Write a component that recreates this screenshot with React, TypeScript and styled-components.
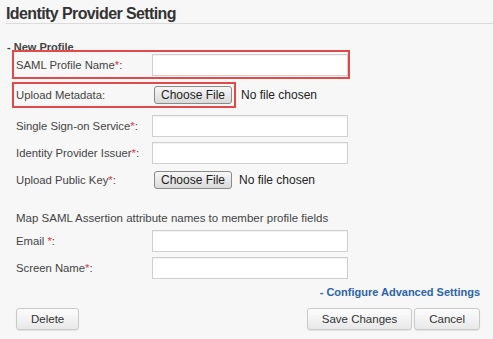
import React from "react";
import styled, { createGlobalStyle } from "styled-components";

const Global = createGlobalStyle`
  html, body { margin: 0; padding: 0; background: #f7f7f7; }
  body { font-family: "Liberation Sans", Arial, sans-serif; color: #444; }
  * { box-sizing: border-box; }
`;

const Page = styled.div`
  width: 493px;
  height: 339px;
  background: #f7f7f7;
  overflow: hidden;
`;

const Title = styled.h1`
  margin: 0 0 0 6px;
  padding-top: 5px;
  font-size: 16px;
  line-height: 18px;
  font-weight: bold;
  letter-spacing: -0.6px;
  color: #333;
  border-bottom: 1px solid #dcdcdc;
`;

const Form = styled.form`
  display: flex;
  flex-direction: column;
  align-items: flex-start;
  padding: 0 13px 0 12px;
  margin: 0;
`;

const Legend = styled.div`
  margin: 17px 0 -4px -5px;
  font-size: 11px;
  font-weight: bold;
  line-height: 13px;
  color: #444;
`;

const Line = styled.div<{ $mt: number }>`
  display: flex;
  align-items: center;
  margin-top: ${(p) => p.$mt}px;
`;

const Frame = styled.div<{ $highlight?: boolean; $h: number }>`
  position: relative;
  display: flex;
  align-items: center;
  height: ${(p) => p.$h}px;
  border: ${(p) => (p.$highlight ? "2px solid #e24a4a" : "none")};
  padding-left: ${(p) => (p.$highlight ? 2 : 4)}px;
`;

const Label = styled.label`
  width: 136px;
  flex-shrink: 0;
  font-size: 11.3px;
  color: #444;
  white-space: nowrap;
`;

const Req = styled.span`
  color: #e8343a;
`;

const TextInput = styled.input`
  width: 196px;
  height: 22px;
  margin: 0;
  border: 1px solid #cfcfcf;
  background: #fff;
  box-shadow: inset 0 1px 1px rgba(0, 0, 0, 0.06);
  font: 12px "Liberation Sans", Arial, sans-serif;
  padding: 2px 4px;
`;

const FileButton = styled.button`
  width: 78px;
  height: 18px;
  margin: 0 2px;
  padding: 0;
  border: 1px solid #8a8a8a;
  border-radius: 3px;
  background: linear-gradient(#f7f7f7, #dadada);
  font: 12px "Liberation Sans", Arial, sans-serif;
  color: #222;
  line-height: 16px;
  white-space: nowrap;
`;

const NoFile = styled.span`
  margin-left: 5px;
  font-size: 12px;
  color: #222;
`;

const Note = styled.p`
  margin: 20px 0 0 4px;
  font-size: 11.5px;
  line-height: 14px;
  color: #444;
`;

const Advanced = styled.a`
  align-self: flex-end;
  margin-top: 6px;
  font-size: 11px;
  font-weight: bold;
  line-height: 14px;
  color: #2a63a8;
  text-decoration: none;
`;

const Actions = styled.div`
  align-self: stretch;
  display: flex;
  justify-content: space-between;
  margin-top: 9px;
  padding-left: 4px;
`;

const ButtonGroup = styled.div`
  display: flex;
  gap: 2px;
`;

const ActionButton = styled.button`
  height: 22px;
  padding: 0 14px;
  border: 1px solid #c9c9c9;
  border-radius: 3px;
  background: linear-gradient(#fdfdfd, #e8e8e8);
  box-shadow: 0 1px 1px rgba(0, 0, 0, 0.08);
  font: 11.5px "Liberation Sans", Arial, sans-serif;
  color: #333;
`;

type TextField = { label: string; req?: boolean; spaced?: boolean };

const ReqLabel = ({ label, req, spaced }: TextField) => (
  <Label>
    {label}
    {req && (
      <>
        {spaced ? " " : ""}
        <Req>*</Req>
      </>
    )}
    :
  </Label>
);

export default function App() {
  return (
    <Page>
      <Global />
      <Title>Identity Provider Setting</Title>
      <Form onSubmit={(e) => e.preventDefault()}>
        <Legend>- New Profile</Legend>
        <Line $mt={0}>
          <Frame $highlight $h={29}>
            <ReqLabel label="SAML Profile Name" req />
            <TextInput type="text" />
          </Frame>
        </Line>
        <Line $mt={3}>
          <Frame $highlight $h={26}>
            <ReqLabel label="Upload Metadata" />
            <FileButton type="button">Choose File</FileButton>
          </Frame>
          <NoFile>No file chosen</NoFile>
        </Line>
        <Line $mt={7}>
          <Frame $h={22}>
            <ReqLabel label="Single Sign-on Service" req />
            <TextInput type="text" />
          </Frame>
        </Line>
        <Line $mt={5}>
          <Frame $h={22}>
            <ReqLabel label="Identity Provider Issuer" req />
            <TextInput type="text" />
          </Frame>
        </Line>
        <Line $mt={5}>
          <Frame $h={22}>
            <ReqLabel label="Upload Public Key" req />
            <FileButton type="button">Choose File</FileButton>
          </Frame>
          <NoFile>No file chosen</NoFile>
        </Line>
        <Note>Map SAML Assertion attribute names to member profile fields</Note>
        <Line $mt={5}>
          <Frame $h={22}>
            <ReqLabel label="Email" req spaced />
            <TextInput type="text" />
          </Frame>
        </Line>
        <Line $mt={5}>
          <Frame $h={22}>
            <ReqLabel label="Screen Name" req />
            <TextInput type="text" />
          </Frame>
        </Line>
        <Advanced href="#">- Configure Advanced Settings</Advanced>
        <Actions>
          <ActionButton type="button">Delete</ActionButton>
          <ButtonGroup>
            <ActionButton type="submit">Save Changes</ActionButton>
            <ActionButton type="button">Cancel</ActionButton>
          </ButtonGroup>
        </Actions>
      </Form>
    </Page>
  );
}
